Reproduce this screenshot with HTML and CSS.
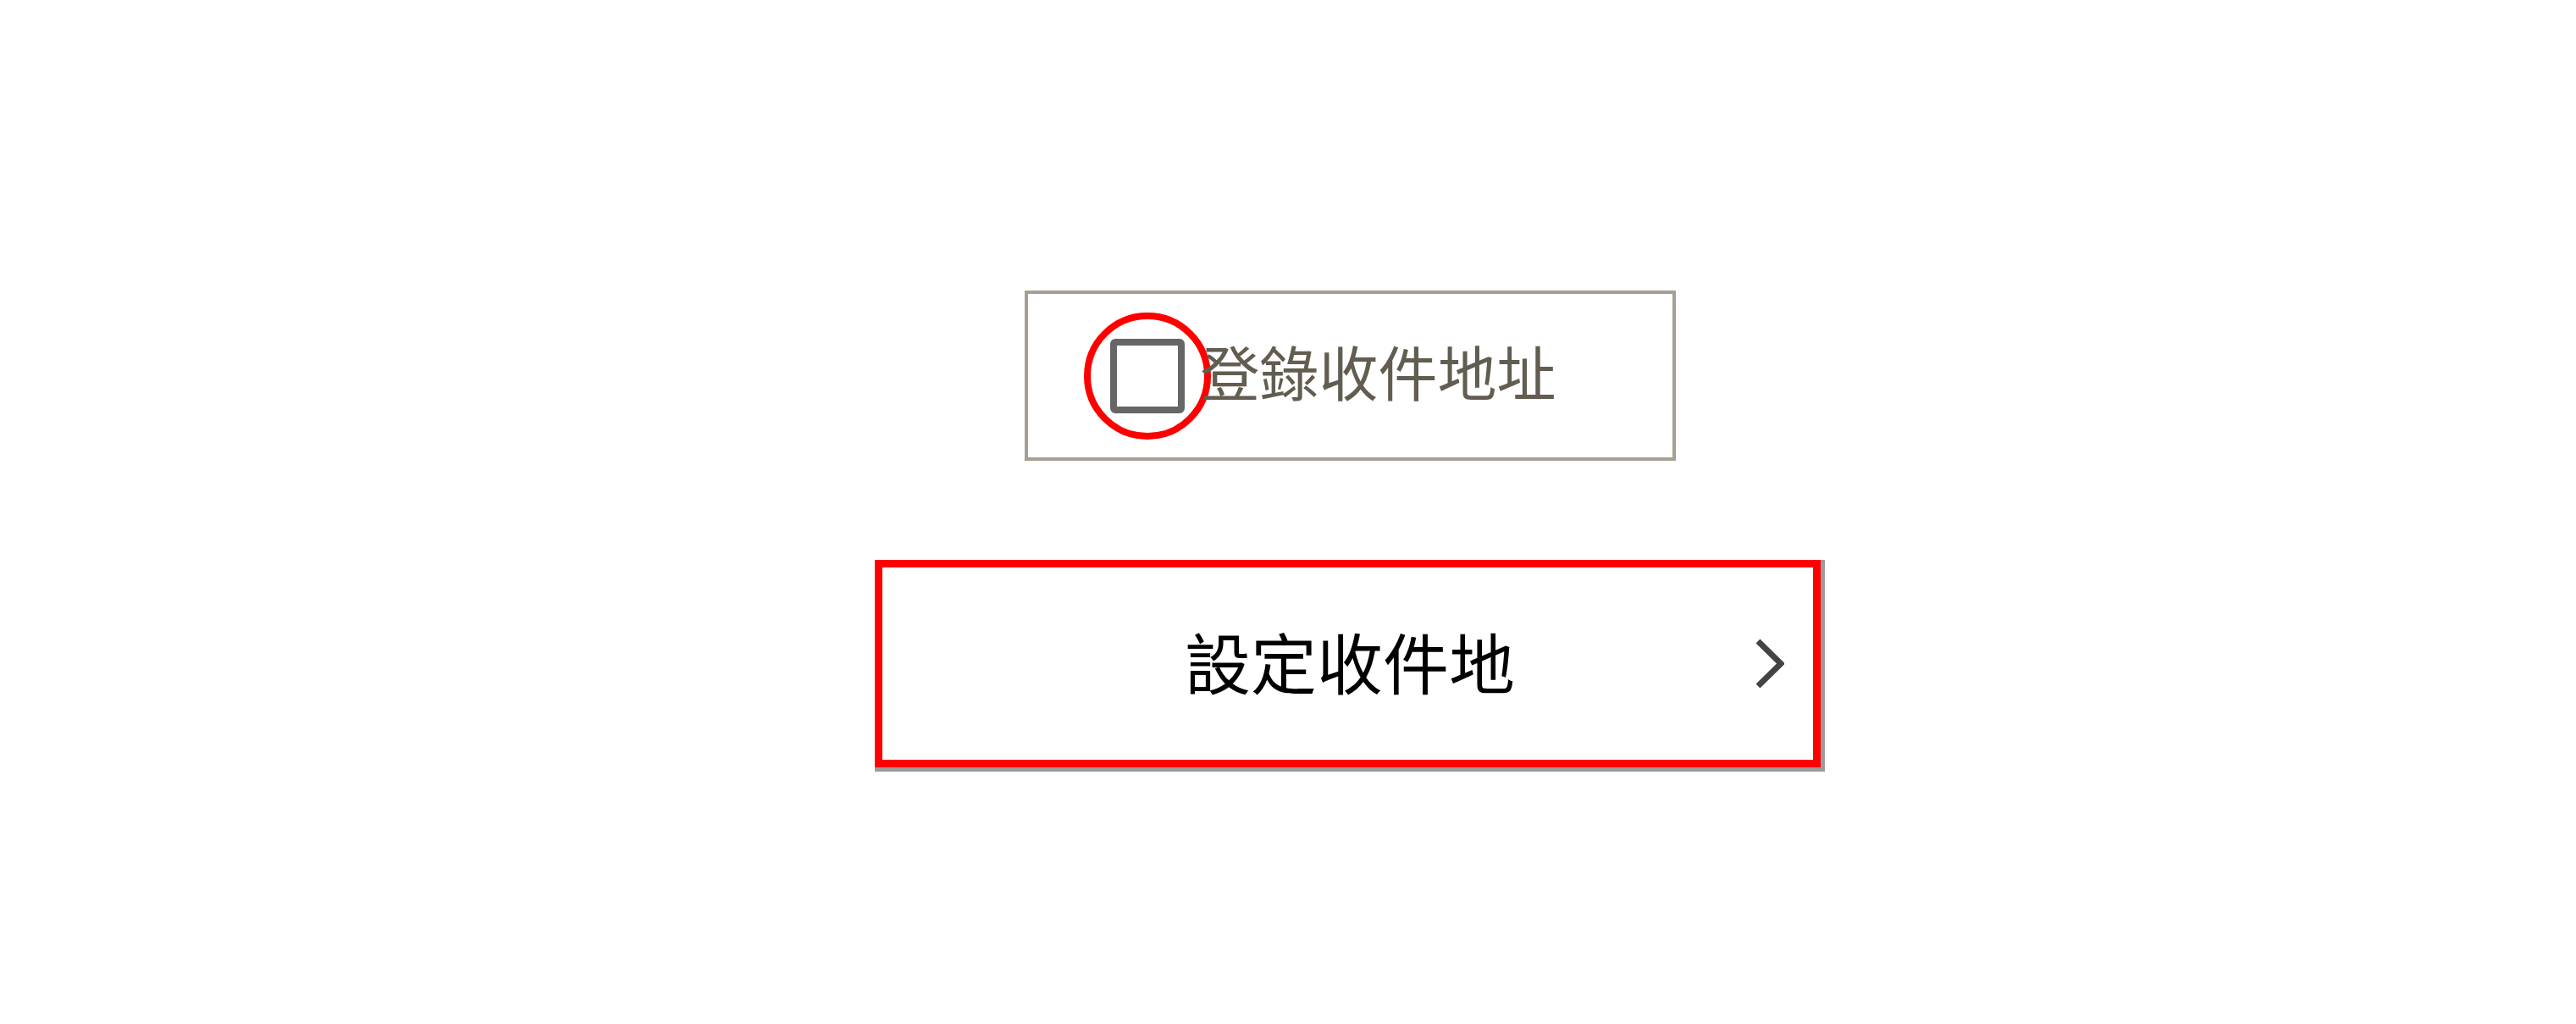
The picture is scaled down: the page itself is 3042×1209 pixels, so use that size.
FILE: index.html
```html
<!DOCTYPE html>
<html lang="zh-Hant">
<head>
    <meta charset="UTF-8">
    <meta name="viewport" content="width=device-width, initial-scale=1.0">
    <title>設定收件地</title>
    <link rel="stylesheet" href="styles.css">
</head>
<body>
    <main class="page">
        <div class="stack">
            <label class="register">
                <span class="check-wrap">
                    <span class="check"></span>
                    <span class="mark-circle"></span>
                </span>
                <span class="register-text">登錄收件地址</span>
            </label>
            <div class="set-btn">
                <span class="mark-rect"></span>
                <span></span>
                <span class="set-text">設定收件地</span>
                <svg class="chevron" width="35" height="61" viewBox="0 0 35 61">
                    <polyline points="4,4 31,30.5 4,57" fill="none" stroke="#444" stroke-width="7"/>
                </svg>
            </div>
        </div>
    </main>
</body>
</html>
```

FILE: styles.css
```css
* {
    padding: 0;
    margin: 0;
    box-sizing: border-box;
}
body {
    background: #fff;
    font-family: "Noto Sans CJK TC", "Noto Sans", sans-serif;
}
.page {
    height: 1209px;
    padding: 343px 0 0 1033px;
}
.stack {
    width: 1122px;
    display: flex;
    flex-direction: column;
    align-items: center;
    gap: 117px;
}
.register {
    width: 769px;
    height: 201px;
    border: 4px solid #a89e93;
    display: flex;
    align-items: center;
    padding-left: 97px;
}
.check-wrap {
    position: relative;
    width: 88px;
    height: 88px;
}
.check {
    display: block;
    width: 88px;
    height: 88px;
    border: 8px solid #666;
    border-radius: 6px;
}
.mark-circle {
    position: absolute;
    left: -31px;
    top: -31px;
    width: 150px;
    height: 150px;
    border: 8px solid #f00;
    border-radius: 50%;
}
.register-text {
    margin-left: 19px;
    font-size: 70px;
    line-height: 1;
    color: #625d50;
    position: relative;
    top: -6px;
}
.set-btn {
    position: relative;
    width: 1122px;
    height: 250px;
    border: 5px solid #9b9b9b;
    display: grid;
    grid-template-columns: 1fr auto 1fr;
    align-items: center;
}
.mark-rect {
    position: absolute;
    left: -5px;
    top: -5px;
    width: 1117px;
    height: 245px;
    border: 9px solid #f00;
}
.set-text {
    font-size: 78px;
    line-height: 1;
    color: #000;
    position: relative;
    top: -6px;
}
.chevron {
    justify-self: end;
    margin-right: 43px;
    position: relative;
    top: -3px;
}
```
